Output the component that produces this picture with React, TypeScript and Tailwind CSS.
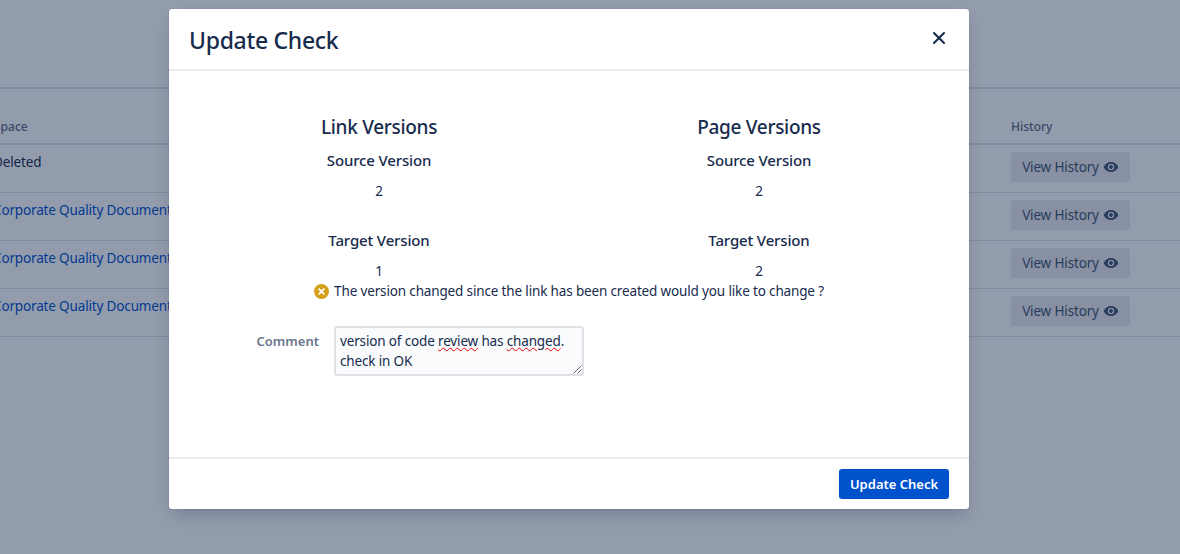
import { X } from 'lucide-react';

const rows = [
  { space: 'Deleted', link: false },
  { space: 'Corporate Quality Documents', link: true },
  { space: 'Corporate Quality Documents', link: true },
  { space: 'Corporate Quality Documents', link: true },
];

function EyeIcon() {
  return (
    <svg viewBox="0 0 24 24" className="h-[16px] w-[16px] text-[#42526e]">
      <path
        fill="currentColor"
        fillRule="evenodd"
        d="M12 4.5C7 4.5 2.7 7.6 1 12c1.7 4.4 6 7.5 11 7.5s9.3-3.1 11-7.5c-1.7-4.4-6-7.5-11-7.5zM12 17a5 5 0 1 1 0-10 5 5 0 0 1 0 10zm0-8a3 3 0 1 0 0 6 3 3 0 0 0 0-6z"
      />
    </svg>
  );
}

function VersionColumn({ title, source, target }: { title: string; source: number; target: number }) {
  return (
    <div className="flex flex-col items-center text-[#172b4d]">
      <h3 className="h-[28px] text-[19px] leading-[28px] font-medium tracking-[-0.3px]">{title}</h3>
      <h4 className="mt-[5px] h-[28px] text-[15px] leading-[28px] font-medium">Source Version</h4>
      <p className="mt-[3px] h-[28px] leading-[28px]">{source}</p>
      <h4 className="mt-[21px] h-[28px] text-[15px] leading-[28px] font-medium">Target Version</h4>
      <p className="mt-[3px] h-[20px] leading-[28px]">{target}</p>
    </div>
  );
}

export default function App() {
  return (
    <div className="relative h-[554px] w-[1180px] overflow-hidden bg-white font-['Noto_Sans','Open_Sans',sans-serif] text-[13.5px] tracking-[-0.15px] text-[#172b4d]">
      {/* page behind the modal */}
      <div className="pt-[87px]">
        <div className="h-[2px] bg-[#dfe1e6]" />
        <div className="flex h-[56px] items-end justify-between border-b-2 border-[#dfe1e6] pb-[8px] text-[12px] leading-[16px] font-medium tracking-normal text-[#5e6c84]">
          <span className="-ml-[6px]">Space</span>
          <span className="mr-[129px] w-[40px]">History</span>
        </div>
        {rows.map((row, i) => (
          <div key={i} className="flex h-[48px] justify-between border-b-[1.5px] border-[#dfe1e6]">
            <span className={`-ml-[7px] pt-[7px] leading-[20px] whitespace-nowrap ${row.link ? 'text-[#0052cc]' : ''}`}>
              {row.space}
            </span>
            <button className="mt-[7px] mr-[50px] flex h-[30px] w-[119px] items-center justify-center gap-[4px] rounded-[3px] bg-[#ebecf0] text-[#42526e]">
              View History <EyeIcon />
            </button>
          </div>
        ))}
      </div>

      {/* modal */}
      <div className="absolute inset-0 flex justify-start bg-[#091e42]/[0.44] pt-[9px] pl-[169px]">
        <div className="flex h-[500px] w-[800px] flex-col rounded-[3px] bg-white shadow-[0_8px_16px_-4px_rgba(9,30,66,0.25),0_0_1px_rgba(9,30,66,0.31)]">
          <div className="flex h-[62px] shrink-0 items-center justify-between border-b-2 border-[#ebecf0] px-[20px]">
            <h2 className="pt-[2px] text-[23px] leading-[28px] font-medium tracking-[-0.3px] text-[#172b4d]">Update Check</h2>
            <X className="mb-[2px] h-[20px] w-[20px] text-[#172b4d]" strokeWidth={2.5} />
          </div>
          <div className="flex-1 px-[20px] pt-[42px]">
            <div className="grid grid-cols-2">
              <VersionColumn title="Link Versions" source={2} target={1} />
              <VersionColumn title="Page Versions" source={2} target={2} />
            </div>
            <div className="mt-[4px] flex h-[20px] items-center justify-center gap-[5px] leading-[20px] text-[#172b4d]">
              <svg viewBox="0 0 16 16" className="h-[15px] w-[15px]">
                <circle cx="8" cy="8" r="8" fill="#d4a017" />
                <path d="M5.5 5.5l5 5m0-5l-5 5" stroke="#fff" strokeWidth="2" strokeLinecap="round" />
              </svg>
              <span>The version changed since the link has been created would you like to change ?</span>
            </div>
            <div className="mt-[25px] flex">
              <label className="mt-[5px] w-[130px] text-right text-[13px] leading-[20px] font-semibold tracking-normal text-[#6b778c]">Comment</label>
              <div className="relative ml-[15px] h-[50px] w-[250px] rounded-[3px] border-2 border-[#dfe1e6] bg-[#fafbfc] px-[4px] pt-[3px] leading-[20px] text-[#172b4d]">
                version of code <span className="underline decoration-[#e00] decoration-wavy decoration-1">review</span> has{' '}
                <span className="underline decoration-[#e00] decoration-wavy decoration-1">changed</span>.<br />
                check in OK
                <svg viewBox="0 0 10 10" className="absolute right-0 bottom-0 h-[10px] w-[10px]">
                  <path d="M9.5 1.5l-8 8M9.5 5.5l-4 4" stroke="#666" strokeWidth="1" />
                </svg>
              </div>
            </div>
          </div>
          <div className="flex h-[52px] shrink-0 items-start justify-end border-t-2 border-[#ebecf0] px-[20px] pt-[10px]">
            <button className="flex h-[30px] w-[110px] items-center justify-center rounded-[3px] bg-[#0052cc] text-[13px] leading-[20px] font-semibold tracking-normal text-white">
              Update Check
            </button>
          </div>
        </div>
      </div>
    </div>
  );
}
